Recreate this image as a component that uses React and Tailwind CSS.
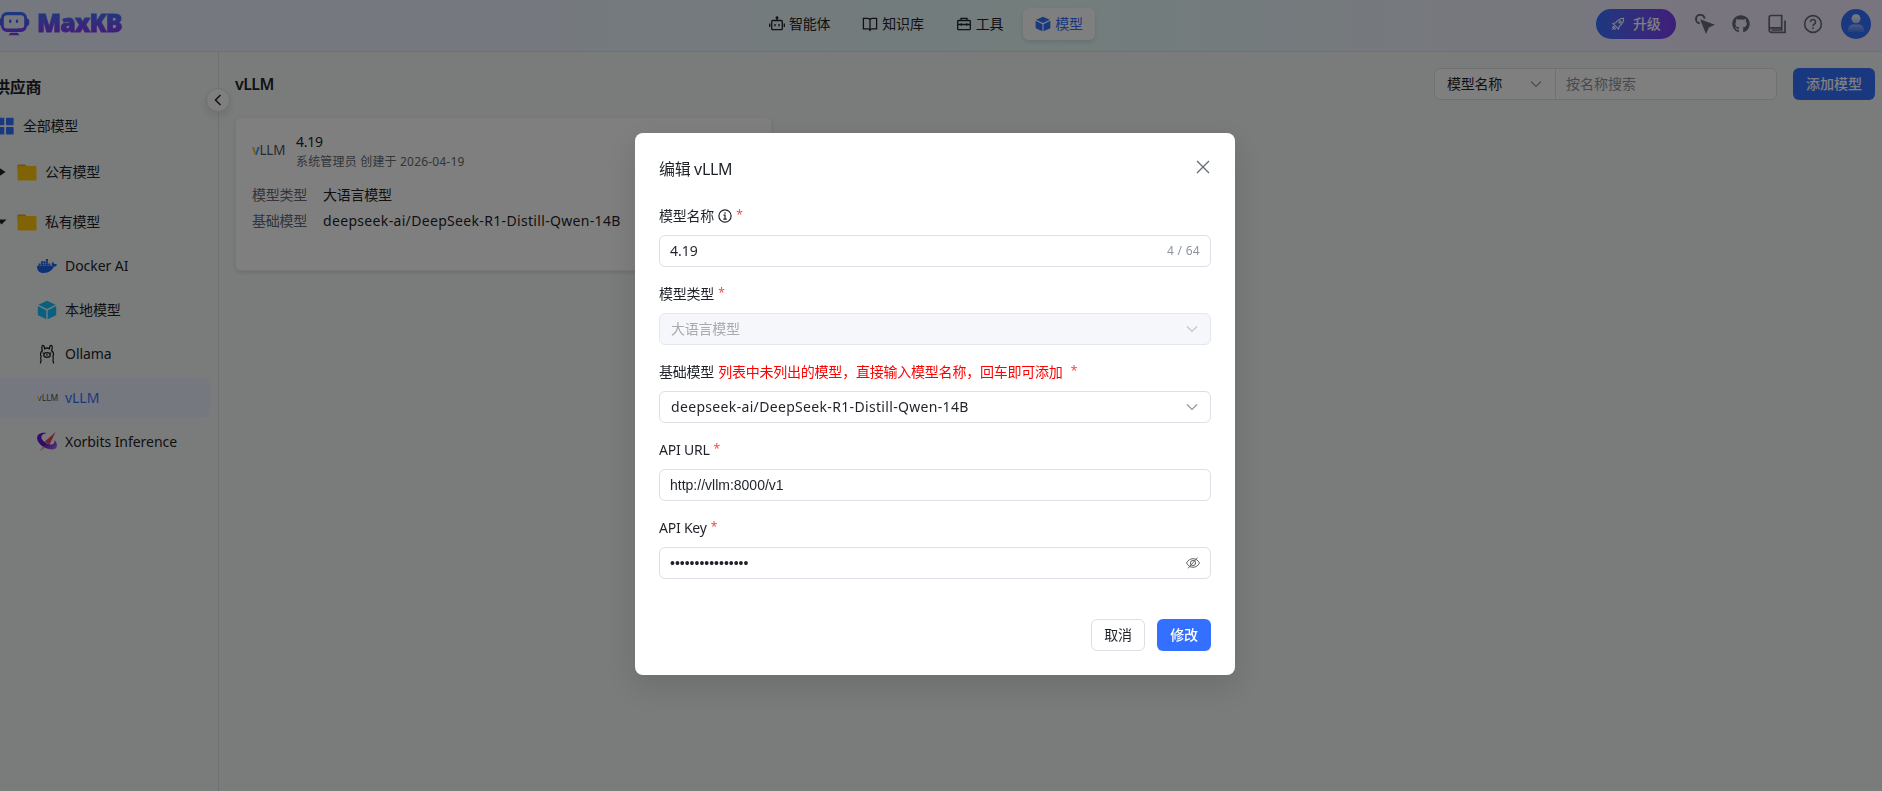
import React, { useState } from "react";
import { FaGithub, FaDocker } from "react-icons/fa";

const FONT = "font-['Noto_Sans','Noto_Sans_CJK_SC',sans-serif]";

const Chevron = ({ className }) => (
  <svg viewBox="0 0 12 12" className={className} fill="none" stroke="currentColor" strokeWidth="1.1">
    <path d="M1 3.5 6 8.5 11 3.5" />
  </svg>
);

const Logo = () => (
  <div className="flex items-center">
    <svg width="32" height="24" viewBox="0 0 32 24" className="-ml-0.5">
      <defs>
        <linearGradient id="logo" x1="0" y1="0" x2="0" y2="1">
          <stop offset="0" stopColor="#3370ff" />
          <stop offset="1" stopColor="#7f3bf5" />
        </linearGradient>
      </defs>
      <path
        fillRule="evenodd"
        fill="url(#logo)"
        d="M9 0h14a6 6 0 0 1 6 6v.3a3 3 0 0 1 2.3 2.7v2.5a3 3 0 0 1-2.3 2.7V14a6 6 0 0 1-6 6H9a6 6 0 0 1-6-6v-.3A3 3 0 0 1 .7 11.5V9A3 3 0 0 1 3 6.3V6a6 6 0 0 1 6-6Zm0 3.3A3.2 3.2 0 0 0 5.8 6.5v6.8A3.2 3.2 0 0 0 9 16.5h5.5c4 0 5-.3 8.5-.3a3.2 3.2 0 0 0 3.2-3.2V6.5A3.2 3.2 0 0 0 23 3.3H9Zm3.2 4.2a1.2 1.2 0 0 1 1.2 1.2v1a1.2 1.2 0 0 1-2.4 0v-1a1.2 1.2 0 0 1 1.2-1.2Zm6.8 0a1.2 1.2 0 0 1 1.2 1.2v1a1.2 1.2 0 0 1-2.4 0v-1a1.2 1.2 0 0 1 1.2-1.2ZM12.5 20.7h7l2 2.5H10.5l2-2.5Z"
      />
    </svg>
    <span className="-mt-1 ml-[7px] bg-linear-to-b from-[#3370ff] from-20% to-[#7f3bf5] to-80% bg-clip-text text-[25px] leading-8 font-black tracking-[-1px] text-transparent [-webkit-text-stroke:0.8px_transparent]">
      MaxKB
    </span>
  </div>
);

const RobotIcon = () => (
  <svg width="16" height="16" viewBox="0 0 16 16" fill="none" stroke="currentColor" strokeWidth="1.3">
    <rect x="2.7" y="4.5" width="10.6" height="9.2" rx="1" />
    <path d="M8 4.5V2M.7 7.5v3.5M15.3 7.5v3.5M6 8v2.2M10 8v2.2" />
    <circle cx="8" cy="1.7" r=".8" fill="currentColor" />
  </svg>
);

const BookIcon = () => (
  <svg width="16" height="16" viewBox="0 0 16 16" fill="none" stroke="currentColor" strokeWidth="1.3">
    <path d="M8 3.5C7.3 2.7 6.5 2.3 5.5 2.3H1.4v10.6h4.6c1 0 1.6.4 2 1.3.4-.9 1-1.3 2-1.3h4.6V2.3h-4.1c-1 0-1.8.4-2.5 1.2ZM8 3.5v10.5" />
  </svg>
);

const ToolIcon = () => (
  <svg width="16" height="16" viewBox="0 0 16 16" fill="none" stroke="currentColor" strokeWidth="1.3">
    <rect x="1.7" y="4.5" width="12.6" height="9.2" rx=".8" />
    <path d="M5 4.5V2.3h6v2.2M1.7 8.5h12.6M5.3 7.3v2.5M10.7 7.3v2.5" />
  </svg>
);

const CubeIcon = ({ className }) => (
  <svg viewBox="0 0 20 20" className={className} fill="currentColor">
    <path d="M10 .8 18.6 4.7 10 8.9 1.4 4.7Z" />
    <path d="M.8 6 9.3 10.2v9L1.5 15.5a1.2 1.2 0 0 1-.7-1.1Z" />
    <path d="M19.2 6 10.7 10.2v9l7.8-3.7a1.2 1.2 0 0 0 .7-1.1Z" />
  </svg>
);

const RocketIcon = () => (
  <svg width="14" height="14" viewBox="0 0 16 16" fill="none" stroke="currentColor" strokeWidth="1.2" strokeLinejoin="round">
    <path d="M14.5 1.5c-4 0-6.5 1.2-9 5L2 7.5 4.5 9.5l2 2L8.5 14l1-3.5c3.8-2.5 5-5 5-9Z" />
    <circle cx="10.3" cy="5.7" r="1.3" />
    <path d="M4.5 11 1.5 14.5M3.5 10.5 1.5 12M5.5 12.5 4 14.5" />
  </svg>
);

const PointerIcon = () => (
  <svg width="20" height="20" viewBox="0 0 20 20">
    <path d="M4.8 9.3A4.3 4.3 0 1 1 9.6 4.6" fill="none" stroke="currentColor" strokeWidth="2" />
    <path d="M5 5.2 20 10.7 13.9 13.5l-2.9 6.5Z" fill="currentColor" />
  </svg>
);

const ManualIcon = () => (
  <svg width="20" height="20" viewBox="0 0 20 20" fill="none" stroke="currentColor" strokeWidth="1.7">
    <path d="M14.7 13.8V1.5H4A1.8 1.8 0 0 0 2.2 3.3v13A2 2 0 0 0 4.2 18.3H18V6.5M14.7 13.8H4.3a2 2 0 0 0-2 2M4.5 16h10.2v-2.2" />
  </svg>
);

const HelpIcon = () => (
  <svg width="20" height="20" viewBox="0 0 20 20" fill="none" stroke="currentColor" strokeWidth="1.6">
    <circle cx="10" cy="10" r="8.4" />
    <path d="M7.5 8a2.5 2.5 0 1 1 3.8 2.1c-.9.6-1.3 1-1.3 2M10 13.3v1.7" />
  </svg>
);

const Avatar = () => (
  <svg width="30" height="30" viewBox="0 0 30 30">
    <defs>
      <linearGradient id="body" x1="0" y1="0" x2="0" y2="1">
        <stop offset="0" stopColor="#fff" stopOpacity=".5" />
        <stop offset="1" stopColor="#fff" stopOpacity=".1" />
      </linearGradient>
      <linearGradient id="head" x1="0" y1="0" x2="0" y2="1">
        <stop offset="0" stopColor="#fff" />
        <stop offset="1" stopColor="#fff" stopOpacity=".6" />
      </linearGradient>
    </defs>
    <circle cx="15" cy="15" r="15" fill="#3370ff" />
    <path d="M7 23v-2c0-3.5 2.5-5.5 5.5-5.5h5c3 0 5.5 2 5.5 5.5v2Z" fill="url(#body)" />
    <circle cx="15" cy="9.8" r="4.5" fill="url(#head)" />
  </svg>
);

const FolderIcon = () => (
  <svg width="20" height="17" viewBox="0 0 20 17">
    <path d="M1 .5h7l2 2v3H.5V1Z" fill="#e59a3a" />
    <path d="M.5 2h18a1 1 0 0 1 1 1v12.5a1 1 0 0 1-1 1h-17a1 1 0 0 1-1-1Z" fill="#ffc60a" />
  </svg>
);

const OllamaIcon = () => (
  <svg width="20" height="20" viewBox="0 0 20 20" fill="none" stroke="#1f2329" strokeWidth="1.3">
    <path d="M3.5 19.5c0-1.3.1-2.3.6-3.2-.7-1.2-.8-2.5 0-3.8-.9-1.6-.9-4.6 1.2-5.7C4.5 4 4.7 1.3 5.8 1.3c1.2 0 1.7 1.7 1.8 3.5 1.4-.9 3.4-.9 4.8 0 .1-1.8.6-3.5 1.8-3.5 1.1 0 1.3 2.7.5 5.5 2.1 1.1 2.1 4.1 1.2 5.7.8 1.3.7 2.6 0 3.8.5.9.6 1.9.6 3.2" />
    <ellipse cx="10" cy="11" rx="3.2" ry="2.3" />
    <path d="M5.7 9h1M13.3 9h1M9.4 10.7h1.2M10 10.7v1" />
  </svg>
);

const XorbitsIcon = () => (
  <svg width="20" height="20" viewBox="0 0 20 20" className="shrink-0">
    <defs>
      <linearGradient id="ring" x1="0" y1="0" x2="1" y2="1">
        <stop offset="0" stopColor="#7a10f5" />
        <stop offset=".5" stopColor="#5a12c8" />
        <stop offset="1" stopColor="#b07be8" />
      </linearGradient>
    </defs>
    <path
      d="M9.5.9C4 .2-.4 2.5.1 6.5c.6 5 6.9 10.6 14.4 10.9 3.7.1 5.9-1.8 5.4-4.8-.3-1.7-1.2-3.2-2.7-4.6.9 2.9-.6 4.7-3.4 4.5C9.5 12.3 4.6 8.7 4.3 5.3 4.1 3 6.3 1.6 9.5.9Z"
      fill="url(#ring)"
    />
    <path d="M18.6 0 7.5 9.8l5 2.7Z" fill="#e8485f" />
    <path d="m6 14.2 2.5 1-6.5 4.3Z" fill="#f2a07b" />
  </svg>
);

const VllmMark = ({ className }) => (
  <span className={`block whitespace-nowrap leading-none text-[#51555c] ${className}`}>
    <span className="bg-linear-to-r from-[#fdb515] from-50% to-[#30a2ff] to-50% bg-clip-text font-bold text-transparent">v</span>LLM
  </span>
);

const navItems = [
  { name: "智能体", icon: <RobotIcon /> },
  { name: "知识库", icon: <BookIcon /> },
  { name: "工具", icon: <ToolIcon /> },
  { name: "模型", icon: <CubeIcon className="size-4" />, active: true },
];

const providers = [
  { name: "Docker AI", icon: <FaDocker className="size-5 text-[#1d63ed]" /> },
  { name: "本地模型", icon: <CubeIcon className="size-5 text-[#14c0ff]" /> },
  { name: "Ollama", icon: <OllamaIcon /> },
  { name: "vLLM", icon: <VllmMark className="text-[8.5px]" />, active: true },
  { name: "Xorbits Inference", icon: <XorbitsIcon /> },
];

const Header = () => (
  <header className="flex h-13 items-center justify-between border-b border-[#dee0e3] bg-[linear-gradient(90deg,#ebf1ff_24.34%,#e5fbf8_56.18%,#f2ebfe_90.18%)] pr-[11px]">
    <div className="w-[757px] pb-1">
      <Logo />
    </div>
    <nav className="flex flex-1 gap-2 pb-1">
      {navItems.map((item) => (
        <a
          key={item.name}
          className={`flex h-8 items-center gap-1 rounded-md px-3 ${
            item.active ? "bg-white text-[#3370ff] shadow-[0_2px_4px_rgba(31,35,41,0.12)]" : ""
          }`}
        >
          {item.icon}
          {item.name}
        </a>
      ))}
    </nav>
    <div className="flex items-center gap-4 pb-1 text-[#646a73]">
      <button className="mr-[3px] flex h-[30px] w-20 items-center gap-2 rounded-full bg-linear-to-r from-[#3370ff] to-[#7f3bf5] pl-[15px] font-medium text-white">
        <RocketIcon />
        升级
      </button>
      <PointerIcon />
      <FaGithub className="mx-px size-[18px]" />
      <ManualIcon />
      <div className="mr-0.5">
        <HelpIcon />
      </div>
      <Avatar />
    </div>
  </header>
);

const Sidebar = () => (
  <aside className="relative w-[219px] shrink-0 border-r border-[#dee0e3] pt-[23px]">
    <h4 className="-ml-1.5 text-base leading-6 font-bold">供应商</h4>
    <div className="mt-[7px] flex h-10 items-center">
      <svg width="18" height="18" viewBox="0 0 18 18" className="-ml-1 shrink-0" fill="#3370ff">
        <rect x=".7" y=".7" width="7.6" height="7.6" rx=".7" />
        <rect x="10" y=".7" width="7.6" height="7.6" rx=".7" />
        <rect x=".7" y="10" width="7.6" height="7.6" rx=".7" />
        <rect x="10" y="10" width="7.6" height="7.6" rx=".7" />
      </svg>
      <span className="ml-[9px]">全部模型</span>
    </div>
    <div className="mt-1.5 flex h-10 items-center">
      <svg width="6" height="10" viewBox="0 0 6 10" className="mr-[11px]">
        <path d="M-1 .5 5.5 5-1 9.5Z" fill="#1f2329" />
      </svg>
      <FolderIcon />
      <span className="ml-2">公有模型</span>
    </div>
    <div className="mt-2.5 flex h-10 items-center">
      <svg width="7" height="6" viewBox="0 0 7 6" className="mr-2.5">
        <path d="M-3 .5H6.5L1.5 5.5Z" fill="#1f2329" />
      </svg>
      <FolderIcon />
      <span className="ml-2">私有模型</span>
    </div>
    <ul className="mt-1 flex flex-col gap-1">
      {providers.map((p) => (
        <li
          key={p.name}
          className={`mr-2 flex h-10 items-center rounded-r-md pl-[37px] tracking-[-0.05px] ${
            p.active ? "bg-[#ebf1ff] text-[#3370ff]" : ""
          }`}
        >
          <span className="mr-2 flex w-5 shrink-0 items-center">{p.icon}</span>
          {p.name}
        </li>
      ))}
    </ul>
    <button className="absolute top-[36px] -right-3 z-10 flex size-6 items-center justify-center rounded-full border border-[#dee0e3] bg-white shadow-[0_4px_8px_rgba(31,35,41,0.1)]">
      <Chevron className="size-3 rotate-90 stroke-[1.5]" />
    </button>
  </aside>
);

const ModelCard = () => (
  <div className="mt-[17px] h-[154px] w-[537px] rounded-md border border-[#eff0f1] bg-white px-4 pt-[13px] shadow-[0_2px_4px_rgba(31,35,41,0.12)]">
    <div className="flex items-center">
      <div className="w-11">
        <VllmMark className="text-[13.5px]" />
      </div>
      <div>
        <div className="leading-[22px]">4.19</div>
        <div className="text-xs leading-[18px] tracking-[0.18px] text-[#646a73]">系统管理员 创建于 2026-04-19</div>
      </div>
    </div>
    <dl className="mt-[13px] grid grid-cols-[71px_1fr] gap-y-1 leading-[22px]">
      <dt className="text-[#646a73]">模型类型</dt>
      <dd>大语言模型</dd>
      <dt className="text-[#646a73]">基础模型</dt>
      <dd className="tracking-[0.33px]">deepseek-ai/DeepSeek-R1-Distill-Qwen-14B</dd>
    </dl>
  </div>
);

const Content = () => (
  <main className="flex-1 pt-4 pr-[7px] pl-4">
    <div className="flex h-8 items-center justify-between">
      <h2 className="text-base font-semibold tracking-[-0.6px]">vLLM</h2>
      <div className="flex">
        <div className="flex h-8 w-[343px] rounded-md border border-[#dee0e3] bg-white">
          <div className="flex w-[121px] items-center justify-between border-r border-[#dee0e3] pr-[13px] pl-3">
            模型名称
            <Chevron className="size-3 text-[#8f959e]" />
          </div>
          <input
            placeholder="按名称搜索"
            className="min-w-0 flex-1 px-2.5 tracking-normal outline-none placeholder:text-[#8f959e]"
          />
        </div>
        <button className="ml-4 h-8 w-[82px] rounded-md bg-[#3370ff] font-medium tracking-normal text-white">添加模型</button>
      </div>
    </div>
    <ModelCard />
  </main>
);

const Field = ({ label, extra, children }) => (
  <div className="mb-4">
    <label className="mb-2 flex h-[22px] items-center gap-1">
      {label}
      {extra}
      <span className="pb-0.5 text-xs text-[#f54a45]">*</span>
    </label>
    {children}
  </div>
);

const InfoIcon = () => (
  <svg width="14" height="14" viewBox="0 0 14 14" fill="none" stroke="currentColor" strokeWidth="1.2">
    <circle cx="7" cy="7" r="6.1" />
    <path d="M7 3.3v1.5M5.5 6.2H7v4M5.3 10.2h3.5" />
  </svg>
);

const EyeOffIcon = () => (
  <svg width="14" height="14" viewBox="0 0 14 14" fill="none" stroke="#606266" strokeWidth="1">
    <path d="M.5 7C2 4.2 4.3 2.7 7 2.7S12 4.2 13.5 7C12 9.8 9.7 11.3 7 11.3S2 9.8.5 7Z" />
    <circle cx="7" cy="7" r="2.6" />
    <path d="M2 12.3 11.5 1.7" />
  </svg>
);

const EditDialog = () => {
  const [form, setForm] = useState({
    name: "4.19",
    url: "http://vllm:8000/v1",
    key: "••••••••••••••••",
  });
  const update = (field) => (e) => setForm({ ...form, [field]: e.target.value });

  return (
    <div className="fixed inset-0 z-20 flex items-start justify-center bg-black/50 pt-[133px]">
      <div className="-ml-3 h-[542px] w-[600px] rounded-lg bg-white p-6 shadow-[0_12px_32px_4px_rgba(0,0,0,0.1)]">
        <div className="flex h-6 items-center justify-between text-base">
          <h3 className="tracking-[-0.35px]">编辑 vLLM</h3>
          <svg width="14" height="14" viewBox="0 0 14 14" className="mr-px mb-1" stroke="#646a73" strokeWidth="1.3">
            <path d="m1 1 12 12M13 1 1 13" />
          </svg>
        </div>

        <form className="mt-6">
          <Field label="模型名称" extra={<InfoIcon />}>
            <div className="flex h-8 items-center rounded-md border border-[#dcdfe6] px-2.5">
              <input className="flex-1 tracking-normal outline-none" value={form.name} onChange={update("name")} />
              <span className="text-xs tracking-[0.3px] text-[#8f959e]">4 / 64</span>
            </div>
          </Field>
          <Field label="模型类型">
            <div className="flex h-8 items-center justify-between rounded-md border border-[#e4e7ed] bg-[#f5f7fa] pr-3 pl-[11px] text-[#a8abb2]">
              大语言模型
              <Chevron className="size-3 text-[#c0c4cc]" />
            </div>
          </Field>
          <Field label="基础模型" extra={<span className="mr-1 text-[#ff0000]">列表中未列出的模型，直接输入模型名称，回车即可添加</span>}>
            <div className="flex h-8 items-center justify-between rounded-md border border-[#dcdfe6] pr-3 pl-[11px] tracking-[0.33px]">
              deepseek-ai/DeepSeek-R1-Distill-Qwen-14B
              <Chevron className="size-3 text-[#8f959e]" />
            </div>
          </Field>
          <Field label="API URL">
            <input
              className="h-8 w-full rounded-md border border-[#dcdfe6] px-2.5 font-['Liberation_Sans',sans-serif] tracking-normal outline-none"
              value={form.url}
              onChange={update("url")}
            />
          </Field>
          <Field label="API Key">
            <div className="flex h-8 items-center rounded-md border border-[#dcdfe6] px-2.5">
              <input
                className="flex-1 font-['Liberation_Sans',sans-serif] tracking-normal outline-none"
                value={form.key}
                onChange={update("key")}
              />
              <EyeOffIcon />
            </div>
          </Field>
        </form>

        <div className="mt-10 flex justify-end gap-3">
          <button className="h-8 w-[54px] rounded-md border border-[#dcdfe6]">取消</button>
          <button className="h-8 w-[54px] rounded-md bg-[#3370ff] font-medium text-white">修改</button>
        </div>
      </div>
    </div>
  );
};

const App = () => {
  return (
    <div className={`flex h-screen flex-col overflow-hidden bg-[#f5f8f7] text-sm tracking-[-0.22px] text-[#1f2329] ${FONT}`}>
      <Header />
      <div className="flex min-h-0 flex-1">
        <Sidebar />
        <Content />
      </div>
      <EditDialog />
    </div>
  );
};

export default App;
